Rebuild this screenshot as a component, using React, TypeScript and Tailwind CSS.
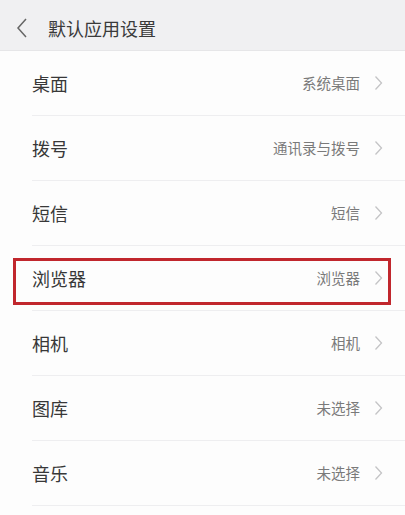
import React from 'react';

type Row = { label: string; value: string; marked?: boolean }

const rows: Row[] = [
    { label: '桌面', value: '系统桌面' },
    { label: '拨号', value: '通讯录与拨号' },
    { label: '短信', value: '短信' },
    { label: '浏览器', value: '浏览器', marked: true },
    { label: '相机', value: '相机' },
    { label: '图库', value: '未选择' },
    { label: '音乐', value: '未选择' },
]

const Chevron = () => (
    <svg width="9" height="16" viewBox="0 0 9 16" className="ml-[14px]">
        <polyline points="1.5,1.5 7.5,8 1.5,14.5" fill="none" stroke="#c4c4c6" strokeWidth="1.3" />
    </svg>
)

export default function App() {
    return (
        <div className="w-[405px] h-[515px] overflow-hidden bg-[#fdfdfd] text-[#333]"
            style={{ fontFamily: '"Noto Sans CJK SC", "Noto Sans", sans-serif' }}>
            {/* header */}
            <div className="flex items-center h-[51px] pt-[6px] bg-[#f0f0f2] border-b border-[#e6e6e8]">
                <svg width="14" height="22" viewBox="0 0 14 22" className="ml-[15px]">
                    <polyline points="11,2 3,11 11,20" fill="none" stroke="#666" strokeWidth="1.5" />
                </svg>
                <span className="ml-[19px] text-[18px] text-[#3a3a3a] leading-none">默认应用设置</span>
            </div>
            {rows.map((r) => (
                <div key={r.label} className="relative pl-[32px]">
                    <div className="flex items-center h-[65px] pr-[22px] border-b border-[#eeeef0]">
                        <span className="flex-1 text-[18px] leading-none text-[#383838]">{r.label}</span>
                        <span className="text-[14.5px] leading-none text-[#7a7a7a]">{r.value}</span>
                        <Chevron />
                    </div>
                    {r.marked && (
                        <div className="absolute left-[13px] right-[14px] top-[12px] h-[47px] border-[3px] border-[#c1272d]" />
                    )}
                </div>
            ))}
        </div>
    )
}
